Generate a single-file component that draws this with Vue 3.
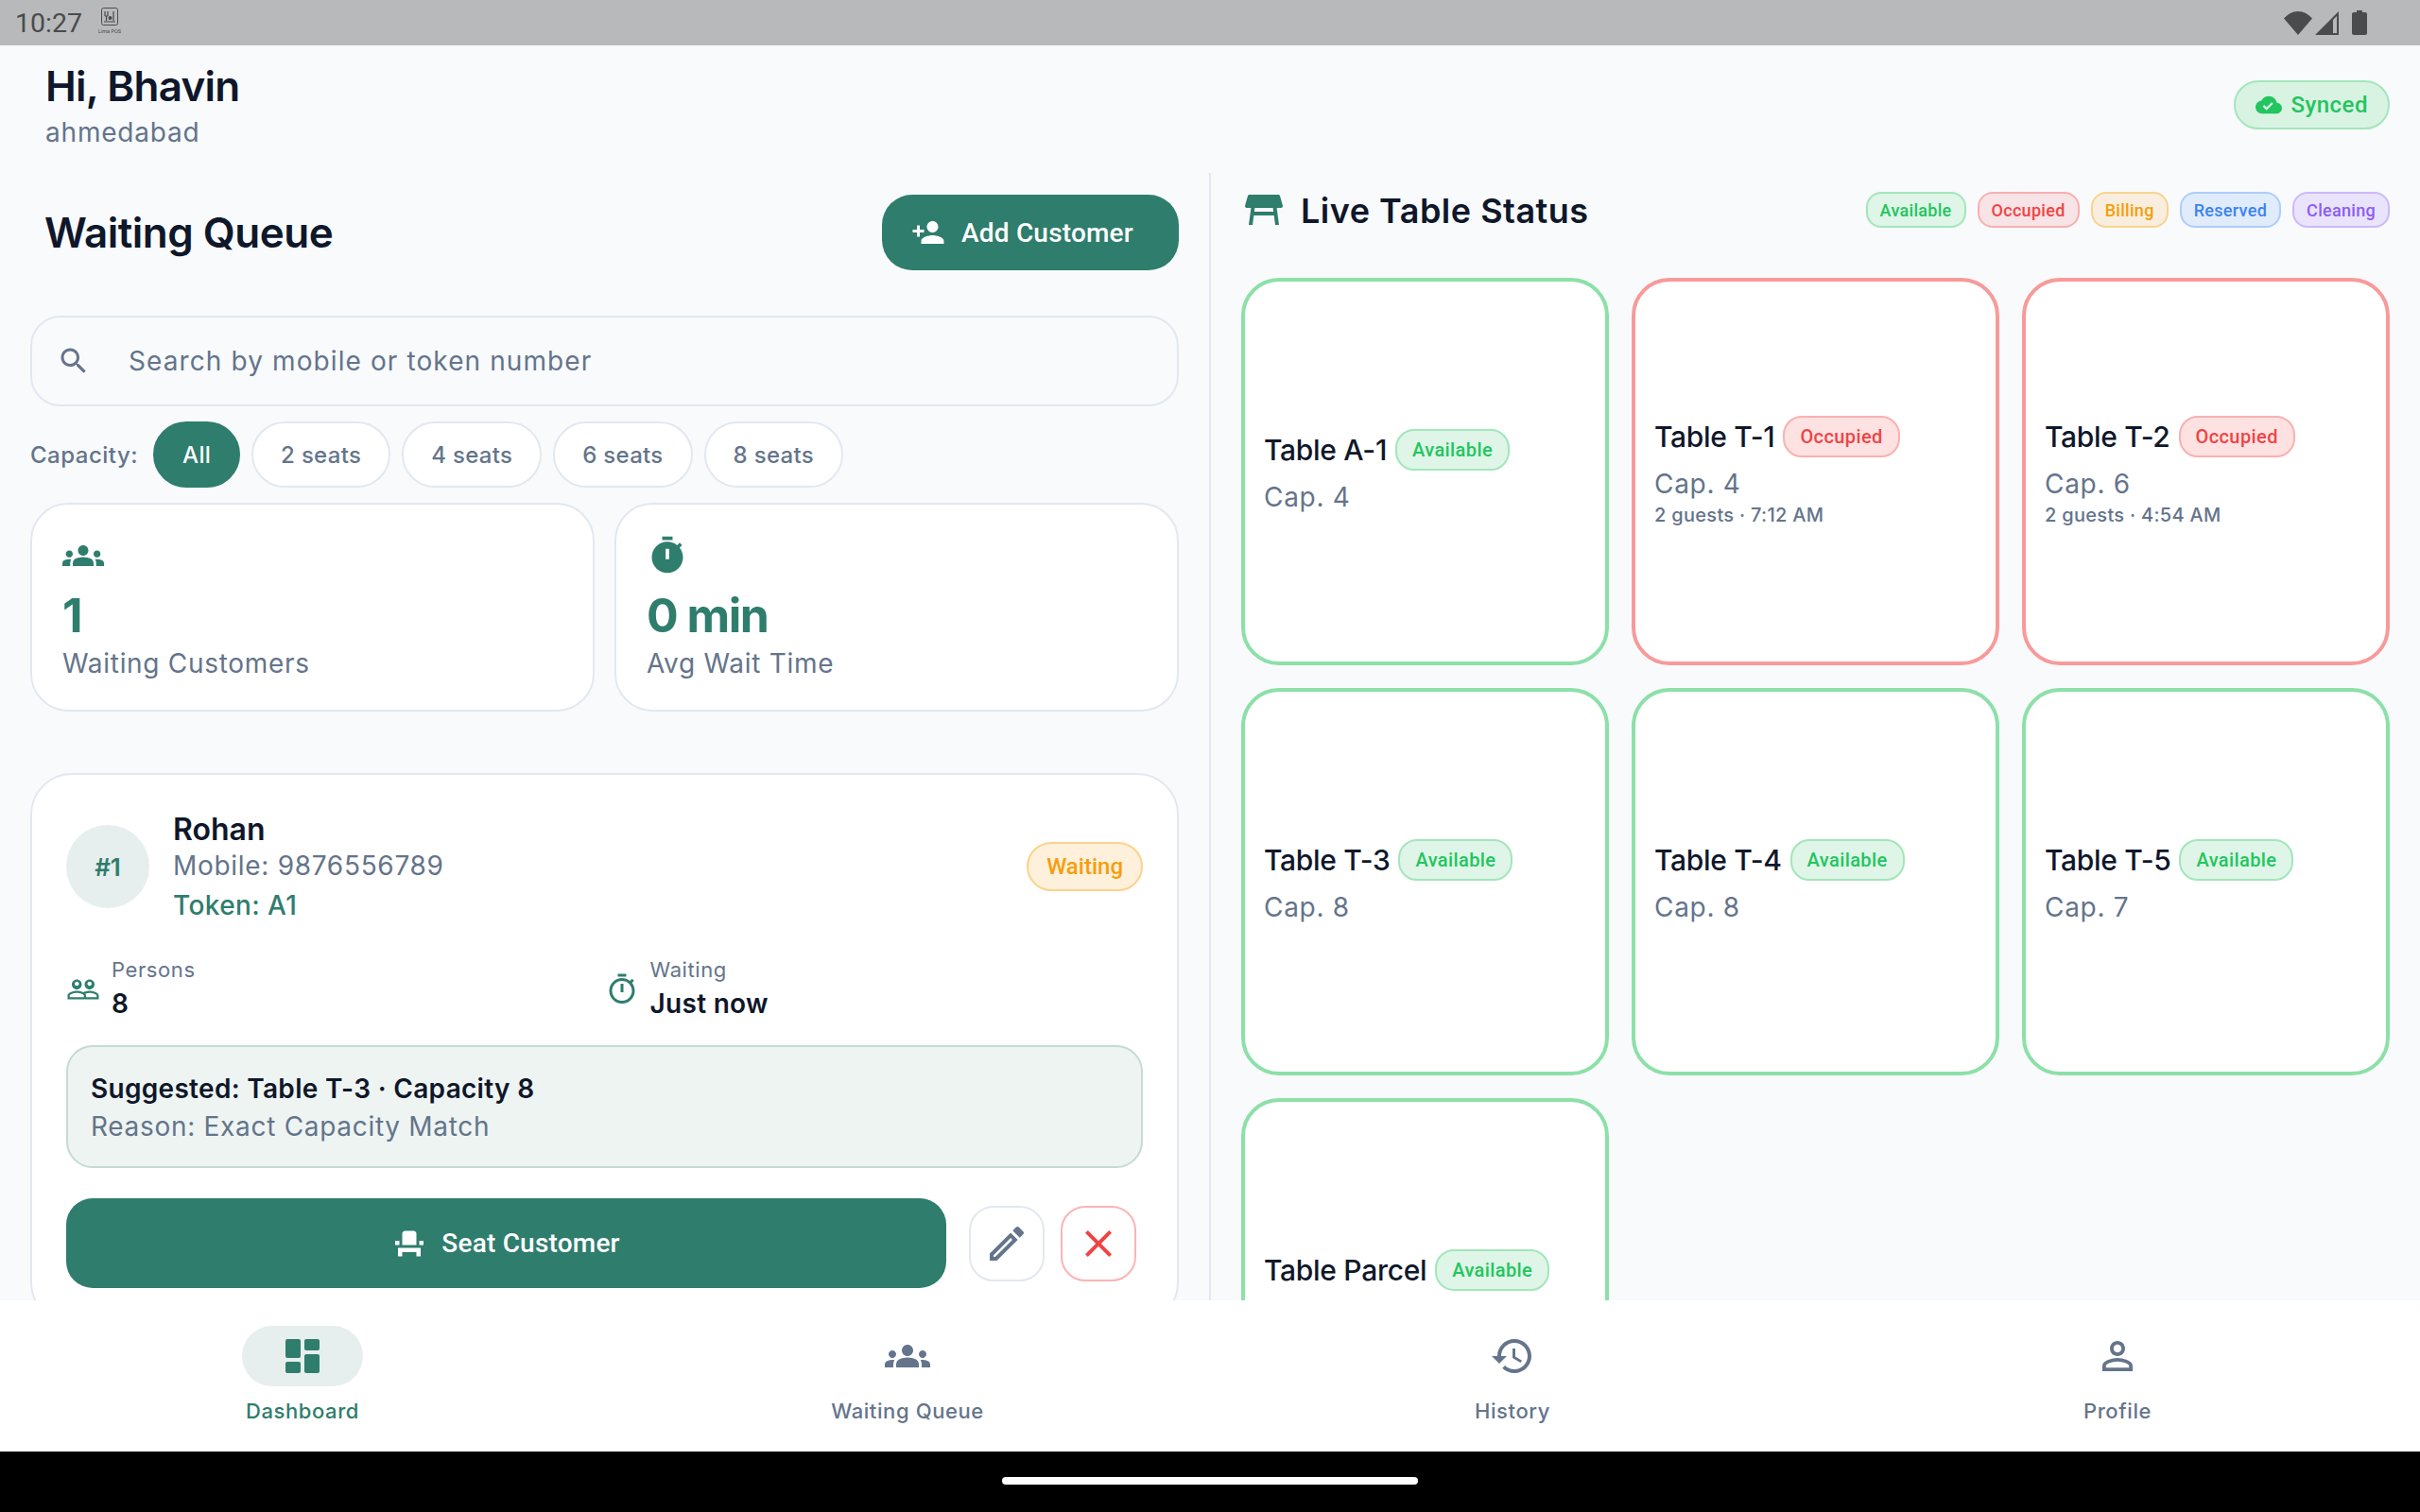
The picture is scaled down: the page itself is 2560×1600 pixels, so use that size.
<template>
  <div class="screen">
    <div class="status-bar">
      <span class="clock">10:27</span>
      <svg class="app-note" viewBox="0 0 24 30">
        <rect x="3.5" y="0.5" width="17" height="18" rx="2" fill="none" stroke="#4a4b4d" />
        <path d="M7 4v5M10 4v5M16 4v10M7 9h3M8.5 9v5M6 15h12" fill="none" stroke="#4a4b4d" stroke-width="1.2" />
        <circle cx="12.5" cy="11" r="2" fill="#4a4b4d" />
        <text x="12" y="27" text-anchor="middle" class="app-note-text">Lima POS</text>
      </svg>
      <div class="status-icons">
        <svg class="wifi" viewBox="0 0 30 25"><path d="M15 25 0 7.5C4 3 9.2 0 15 0s11 3 15 7.5z" /></svg>
        <svg class="signal" viewBox="0 0 25 25"><path d="M25 0v25H0zM23 5 19 9v14h4z" fill-rule="evenodd" /></svg>
        <svg class="battery" viewBox="0 0 16 26"><path d="M5 0h6v2h3a2 2 0 0 1 2 2v20a2 2 0 0 1-2 2H2a2 2 0 0 1-2-2V4a2 2 0 0 1 2-2h3z" /></svg>
      </div>
    </div>

    <header class="top">
      <div>
        <div class="hello">Hi, Bhavin</div>
        <div class="city">ahmedabad</div>
      </div>
      <div class="synced">
        <svg viewBox="0 0 24 24"><path :d="icons.cloud" /></svg>
        Synced
      </div>
    </header>

    <main class="main">
      <section class="left">
        <div class="queue-head">
          <h1>Waiting Queue</h1>
          <button class="add-btn">
            <svg viewBox="0 0 24 24"><path :d="icons.personAdd" /></svg>
            Add Customer
          </button>
        </div>

        <div class="search">
          <svg viewBox="0 0 24 24"><path :d="icons.search" /></svg>
          <span>Search by mobile or token number</span>
        </div>

        <div class="chips">
          <span class="chips-label">Capacity:</span>
          <span v-for="c in capacities" class="chip" :class="{ active: c == 'All' }">{{ c }}</span>
        </div>

        <div class="stats">
          <div class="stat">
            <svg viewBox="0 0 24 24"><path :d="icons.groups" /></svg>
            <div class="stat-value">1</div>
            <div class="stat-label">Waiting Customers</div>
          </div>
          <div class="stat">
            <svg viewBox="0 0 24 24"><path :d="icons.timer" /></svg>
            <div class="stat-value">0 min</div>
            <div class="stat-label">Avg Wait Time</div>
          </div>
        </div>

        <div class="queue-card">
          <div class="person-row">
            <div class="avatar">#1</div>
            <div class="person-text">
              <div class="person-name">Rohan</div>
              <div class="person-mobile">Mobile: 9876556789</div>
              <div class="person-token">Token: A1</div>
            </div>
            <div class="waiting-tag">Waiting</div>
          </div>

          <div class="info-row">
            <div class="info">
              <svg viewBox="0 0 24 24"><path :d="icons.people" /></svg>
              <div>
                <div class="info-label">Persons</div>
                <div class="info-value">8</div>
              </div>
            </div>
            <div class="info">
              <svg viewBox="0 0 24 24"><path :d="icons.timerOutline" /></svg>
              <div>
                <div class="info-label">Waiting</div>
                <div class="info-value">Just now</div>
              </div>
            </div>
          </div>

          <div class="suggest">
            <div class="suggest-title">Suggested: Table T-3 · Capacity 8</div>
            <div class="suggest-reason">Reason: Exact Capacity Match</div>
          </div>

          <div class="actions">
            <button class="seat-btn">
              <svg viewBox="0 0 24 24"><path :d="icons.seat" /></svg>
              Seat Customer
            </button>
            <button class="icon-btn">
              <svg viewBox="0 0 24 24"><path :d="icons.edit" /></svg>
            </button>
            <button class="icon-btn danger">
              <svg viewBox="0 0 24 24"><path :d="icons.close" /></svg>
            </button>
          </div>
        </div>
      </section>

      <section class="right">
        <div class="right-head">
          <svg viewBox="0 0 24 24"><path :d="icons.table" /></svg>
          <h2>Live Table Status</h2>
          <div class="legend">
            <span v-for="l in legend" class="tag" :class="l.toLowerCase()">{{ l }}</span>
          </div>
        </div>

        <div class="tables">
          <div v-for="t in tables" class="table-card" :class="t.status.toLowerCase()">
            <div class="table-title">
              <span>{{ t.name }}</span>
              <span class="table-tag" :class="t.status.toLowerCase()">{{ t.status }}</span>
            </div>
            <div class="table-cap">{{ t.cap ? `Cap. ${t.cap}` : '\u00a0' }}</div>
            <div v-if="t.note" class="table-note">{{ t.note }}</div>
          </div>
        </div>
      </section>
    </main>

    <nav class="nav">
      <div v-for="n in nav" class="nav-item" :class="{ active: n.active }">
        <div class="nav-icon">
          <svg viewBox="0 0 24 24"><path :d="n.icon" /></svg>
        </div>
        <div class="nav-label">{{ n.label }}</div>
      </div>
    </nav>

    <div class="gesture"><div class="home-bar"></div></div>
  </div>
</template>

<script setup>
  const icons = {
    cloud: 'M19.35 10.04C18.67 6.59 15.64 4 12 4 9.11 4 6.6 5.64 5.35 8.04 2.34 8.36 0 10.91 0 14c0 3.31 2.69 6 6 6h13c2.76 0 5-2.24 5-5 0-2.64-2.05-4.78-4.65-4.96zM10 17l-3.5-3.5 1.41-1.41L10 14.17l4.6-4.6 1.41 1.41L10 17z',
    personAdd: 'M15 12c2.21 0 4-1.79 4-4s-1.79-4-4-4-4 1.79-4 4 1.79 4 4 4zm-9-2V7H4v3H1v2h3v3h2v-3h3v-2H6zm9 4c-2.67 0-8 1.34-8 4v2h16v-2c0-2.66-5.33-4-8-4z',
    search: 'M15.5 14h-.79l-.28-.27C15.41 12.59 16 11.11 16 9.5 16 5.91 13.09 3 9.5 3S3 5.91 3 9.5 5.91 16 9.5 16c1.61 0 3.09-.59 4.23-1.57l.27.28v.79l5 4.99L20.49 19l-4.99-5zm-6 0C7.01 14 5 11.99 5 9.5S7.01 5 9.5 5 14 7.01 14 9.5 11.99 14 9.5 14z',
    groups: 'M12 12.75c1.63 0 3.07.39 4.24.9 1.08.48 1.76 1.56 1.76 2.73V18H6v-1.61c0-1.18.68-2.26 1.76-2.73 1.17-.52 2.61-.91 4.24-.91zM4 13c1.1 0 2-.9 2-2s-.9-2-2-2-2 .9-2 2 .9 2 2 2zm1.13 1.1c-.37-.06-.74-.1-1.13-.1-.99 0-1.93.21-2.78.58C.48 14.9 0 15.62 0 16.43V18h4.5v-1.61c0-.83.23-1.61.63-2.29zM20 13c1.1 0 2-.9 2-2s-.9-2-2-2-2 .9-2 2 .9 2 2 2zm4 3.43c0-.81-.48-1.53-1.22-1.85-.85-.37-1.79-.58-2.78-.58-.39 0-.76.04-1.13.1.4.68.63 1.46.63 2.29V18H24v-1.57zM12 6c1.66 0 3 1.34 3 3s-1.34 3-3 3-3-1.34-3-3 1.34-3 3-3z',
    timer: 'M9 1h6v2H9zm10.03 6.39l1.42-1.42c-.43-.51-.9-.99-1.41-1.41l-1.42 1.42C16.07 4.74 14.12 4 12 4c-4.97 0-9 4.03-9 9s4.02 9 9 9 9-4.03 9-9c0-2.12-.74-4.07-1.97-5.61zM13 14h-2V8h2v6z',
    timerOutline: 'M15 1H9v2h6V1zm-4 13h2V8h-2v6zm8.03-6.61l1.42-1.42c-.43-.51-.9-.99-1.41-1.41l-1.42 1.42C16.07 4.74 14.12 4 12 4c-4.97 0-9 4.03-9 9s4.02 9 9 9 9-4.03 9-9c0-2.12-.74-4.07-1.97-5.61zM12 20c-3.87 0-7-3.13-7-7s3.13-7 7-7 7 3.13 7 7-3.13 7-7 7z',
    people: 'M16.5 13c-1.2 0-3.07.34-4.5 1-1.43-.67-3.3-1-4.5-1C5.33 13 1 14.08 1 16.25V19h22v-2.75c0-2.17-4.33-3.25-6.5-3.25zm-4 4.5h-10v-1.25c0-.54 2.56-1.75 5-1.75s5 1.21 5 1.75v1.25zm9 0H14v-1.25c0-.46-.2-.86-.52-1.22.88-.3 1.96-.53 3.02-.53 2.44 0 5 1.21 5 1.75v1.25zM7.5 12c1.93 0 3.5-1.57 3.5-3.5S9.43 5 7.5 5 4 6.57 4 8.5 5.57 12 7.5 12zm0-5.5c.83 0 1.5.67 1.5 1.5s-.67 1.5-1.5 1.5S6 8.83 6 8s.67-1.5 1.5-1.5zm9 5.5c1.93 0 3.5-1.57 3.5-3.5S18.43 5 16.5 5 13 6.57 13 8.5s1.57 3.5 3.5 3.5zm0-5.5c.83 0 1.5.67 1.5 1.5s-.67 1.5-1.5 1.5S15 8.83 15 8s.67-1.5 1.5-1.5z',
    seat: 'M4 18v3h3v-3h10v3h3v-6H4v3zm15-8h3v3h-3v-3zM2 10h3v3H2v-3zm15 3H7V5c0-1.1.9-2 2-2h6c1.1 0 2 .9 2 2v8z',
    edit: 'M14.06 9.02l.92.92L5.92 19H5v-.92l9.06-9.06M17.66 3c-.25 0-.51.1-.7.29l-1.83 1.83 3.75 3.75 1.83-1.83c.39-.39.39-1.02 0-1.41l-2.34-2.34c-.2-.2-.45-.29-.71-.29zm-3.6 3.19L3 17.25V21h3.75L17.81 9.94l-3.75-3.75z',
    close: 'M19 6.41L17.59 5 12 10.59 6.41 5 5 6.41 10.59 12 5 17.59 6.41 19 12 13.41 17.59 19 19 17.59 13.41 12z',
    table: 'M21.96 9.73l-1.43-5C20.41 4.3 20.02 4 19.57 4H4.43c-.45 0-.84.3-.96.73l-1.43 5C1.86 10.36 2.34 11 3 11h2.2L4 20h2l.67-5h10.67l.66 5h2l-1.2-9H21c.66 0 1.14-.64.96-1.27zM6.93 13l.27-2h9.6l.27 2H6.93z',
    dashboard: 'M4 3h6a1 1 0 0 1 1 1v8a1 1 0 0 1-1 1H4a1 1 0 0 1-1-1V4a1 1 0 0 1 1-1zm0 12h6a1 1 0 0 1 1 1v4a1 1 0 0 1-1 1H4a1 1 0 0 1-1-1v-4a1 1 0 0 1 1-1zm10-4h6a1 1 0 0 1 1 1v8a1 1 0 0 1-1 1h-6a1 1 0 0 1-1-1v-8a1 1 0 0 1 1-1zm0-8h6a1 1 0 0 1 1 1v4a1 1 0 0 1-1 1h-6a1 1 0 0 1-1-1V4a1 1 0 0 1 1-1z',
    history: 'M13 3c-4.97 0-9 4.03-9 9H1l3.89 3.89.07.14L9 12H6c0-3.87 3.13-7 7-7s7 3.13 7 7-3.13 7-7 7c-1.93 0-3.68-.79-4.94-2.06l-1.42 1.42C8.27 19.99 10.51 21 13 21c4.97 0 9-4.03 9-9s-4.03-9-9-9zm-1 5v5l4.28 2.54.72-1.21-3.5-2.08V8H12z',
    person: 'M12 5.9c1.16 0 2.1.94 2.1 2.1s-.94 2.1-2.1 2.1S9.9 9.16 9.9 8s.94-2.1 2.1-2.1m0 9c2.97 0 6.1 1.46 6.1 2.1v1.1H5.9V17c0-.64 3.13-2.1 6.1-2.1M12 4C9.79 4 8 5.79 8 8s1.79 4 4 4 4-1.79 4-4-1.79-4-4-4zm0 9c-2.67 0-8 1.34-8 4v3h16v-3c0-2.66-5.33-4-8-4z',
  };

  const capacities = ['All', '2 seats', '4 seats', '6 seats', '8 seats'];
  const legend = ['Available', 'Occupied', 'Billing', 'Reserved', 'Cleaning'];

  const tables = [
    { name: 'Table A-1', status: 'Available', cap: 4 },
    { name: 'Table T-1', status: 'Occupied', cap: 4, note: '2 guests · 7:12 AM' },
    { name: 'Table T-2', status: 'Occupied', cap: 6, note: '2 guests · 4:54 AM' },
    { name: 'Table T-3', status: 'Available', cap: 8 },
    { name: 'Table T-4', status: 'Available', cap: 8 },
    { name: 'Table T-5', status: 'Available', cap: 7 },
    { name: 'Table Parcel', status: 'Available' },
  ];

  const nav = [
    { label: 'Dashboard', icon: icons.dashboard, active: true },
    { label: 'Waiting Queue', icon: icons.groups },
    { label: 'History', icon: icons.history },
    { label: 'Profile', icon: icons.person },
  ];
</script>

<style>
  html,
  body {
    margin: 0;
    padding: 0;
  }
</style>

<style scoped>
  .screen {
    --teal: #2f7d6d;
    --ink: #0f172a;
    --grey: #64748b;
    --line: #e2e8f0;
    display: flex;
    flex-direction: column;
    width: 2560px;
    height: 1600px;
    overflow: hidden;
    background: #f8fafc;
    color: var(--ink);
    font-family: Inter, "Noto Sans", sans-serif;
  }
  svg {
    display: block;
    flex: none;
    fill: currentColor;
  }

  .status-bar {
    display: flex;
    align-items: center;
    flex: none;
    height: 48px;
    padding: 0 56px 0 16px;
    background: #b8b9bb;
    color: #4a4b4d;
  }
  .clock {
    font-family: Roboto, sans-serif;
    font-size: 28.5px;
  }
  .app-note {
    width: 24px;
    height: 30px;
    margin: 0 0 2px 17px;
  }
  .app-note-text {
    font-family: Roboto, sans-serif;
    font-size: 5.5px;
    fill: #4a4b4d;
  }
  .status-icons {
    display: flex;
    align-items: center;
    margin-left: auto;
  }
  .wifi {
    width: 30px;
    height: 25px;
  }
  .signal {
    width: 25px;
    height: 25px;
    margin-left: 3px;
  }
  .battery {
    width: 16px;
    height: 26px;
    margin-left: 14px;
  }

  .top {
    display: flex;
    align-items: center;
    justify-content: space-between;
    flex: none;
    height: 135px;
    padding: 0 32px 10px 48px;
    box-sizing: border-box;
  }
  .hello {
    font-size: 44px;
    font-weight: 600;
    line-height: 54px;
    letter-spacing: -0.8px;
  }
  .city {
    margin-top: 4px;
    font-size: 28px;
    line-height: 36px;
    letter-spacing: 0.8px;
    color: var(--grey);
  }
  .synced {
    display: flex;
    align-items: center;
    gap: 9px;
    height: 52px;
    padding: 0 21px;
    box-sizing: border-box;
    border: 2px solid #a3e6bb;
    border-radius: 26px;
    background: #d9f3e3;
    color: #22c55e;
    font-family: Roboto, sans-serif;
    font-size: 24px;
    font-weight: 500;
    letter-spacing: 0.5px;
  }
  .synced svg {
    width: 28px;
    height: 28px;
  }

  .main {
    display: flex;
    flex: 1;
    min-height: 0;
  }
  .left {
    width: 1281px;
    flex: none;
    box-sizing: border-box;
    padding: 23px 32px 0 32px;
    border-right: 2px solid var(--line);
    overflow: hidden;
  }
  .queue-head {
    display: flex;
    align-items: center;
    justify-content: space-between;
    padding-left: 15px;
  }
  h1 {
    margin: 0;
    font-size: 44px;
    font-weight: 600;
    letter-spacing: -0.5px;
  }
  .add-btn {
    display: flex;
    align-items: center;
    gap: 17px;
    width: 314px;
    height: 80px;
    padding: 0 0 0 31px;
    border: none;
    border-radius: 32px;
    background: var(--teal);
    color: #fff;
    font: 500 28px Roboto, sans-serif;
    letter-spacing: 0.2px;
  }
  .add-btn svg {
    width: 36px;
    height: 36px;
  }
  .search {
    display: flex;
    align-items: center;
    gap: 40px;
    height: 96px;
    margin-top: 48px;
    padding: 0 26px;
    box-sizing: border-box;
    border: 2px solid var(--line);
    border-radius: 32px;
    color: var(--grey);
    font-size: 28px;
    letter-spacing: 1.1px;
  }
  .search svg {
    width: 36px;
    height: 36px;
  }
  .chips {
    display: flex;
    align-items: center;
    gap: 12px;
    margin-top: 16px;
  }
  .chips-label {
    margin-right: 4px;
    font-size: 24px;
    font-weight: 500;
    letter-spacing: 0.5px;
    color: var(--grey);
  }
  .chip {
    display: flex;
    align-items: center;
    height: 70px;
    padding: 0 29px;
    box-sizing: border-box;
    border: 2px solid var(--line);
    border-radius: 35px;
    background: #fff;
    color: var(--grey);
    font-size: 24px;
    font-weight: 500;
    letter-spacing: 0.3px;
  }
  .chip.active {
    border-color: var(--teal);
    background: var(--teal);
    color: #fff;
  }
  .stats {
    display: grid;
    grid-template-columns: 1fr 1fr;
    gap: 21px;
    margin-top: 16px;
  }
  .stat {
    height: 221px;
    padding: 32px;
    box-sizing: border-box;
    border: 2px solid var(--line);
    border-radius: 40px;
    background: #fff;
  }
  .stat svg {
    width: 44px;
    height: 44px;
    color: var(--teal);
  }
  .stat-value {
    margin-top: 11px;
    font-size: 50px;
    font-weight: 700;
    line-height: 60px;
    letter-spacing: -1.5px;
    color: var(--teal);
  }
  .stat-label {
    margin-top: 1px;
    font-size: 28px;
    line-height: 40px;
    letter-spacing: 0.7px;
    color: var(--grey);
  }

  .queue-card {
    margin-top: 65px;
    padding: 36px;
    border: 2px solid var(--line);
    border-radius: 44px;
    background: #fff;
  }
  .person-row {
    display: flex;
    align-items: center;
    gap: 25px;
  }
  .avatar {
    display: flex;
    align-items: center;
    justify-content: center;
    width: 88px;
    height: 88px;
    margin-bottom: 4px;
    border-radius: 50%;
    background: #e6efed;
    color: var(--teal);
    font-size: 26px;
    font-weight: 600;
  }
  .person-text {
    flex: 1;
    padding-top: 2px;
  }
  .person-name {
    font-size: 32px;
    font-weight: 600;
    line-height: 40px;
  }
  .person-mobile {
    font-size: 28px;
    line-height: 36px;
    letter-spacing: 0.7px;
    color: var(--grey);
  }
  .person-token {
    font-size: 28px;
    font-weight: 500;
    line-height: 48px;
    letter-spacing: 0.4px;
    color: var(--teal);
  }
  .waiting-tag {
    display: flex;
    align-items: center;
    height: 52px;
    margin-bottom: 4px;
    padding: 0 19px;
    box-sizing: border-box;
    border: 2px solid #fbd38d;
    border-radius: 26px;
    background: #fef0db;
    color: #f59e0b;
    font-family: Roboto, sans-serif;
    font-size: 24px;
    font-weight: 500;
  }
  .info-row {
    display: grid;
    grid-template-columns: 1fr 1fr;
    margin-top: 28px;
  }
  .info {
    display: flex;
    align-items: center;
    gap: 12px;
  }
  .info svg {
    width: 36px;
    height: 36px;
    margin-top: 4px;
    color: var(--teal);
  }
  .info-label {
    font-size: 22px;
    line-height: 32px;
    letter-spacing: 0.6px;
    color: var(--grey);
  }
  .info-value {
    margin-top: 2px;
    font-size: 28px;
    font-weight: 600;
    line-height: 36px;
    letter-spacing: 0.3px;
  }
  .suggest {
    height: 130px;
    margin-top: 26px;
    padding: 24px;
    box-sizing: border-box;
    border: 2px solid #c6dad5;
    border-radius: 28px;
    background: #eef4f2;
  }
  .suggest-title {
    font-size: 28px;
    font-weight: 600;
    line-height: 40px;
    letter-spacing: 0.3px;
  }
  .suggest-reason {
    font-size: 28px;
    line-height: 40px;
    letter-spacing: 0.7px;
    color: var(--grey);
  }
  .actions {
    display: flex;
    align-items: center;
    margin-top: 32px;
  }
  .seat-btn {
    display: flex;
    align-items: center;
    justify-content: center;
    flex: none;
    gap: 16px;
    width: 931px;
    height: 95px;
    margin-right: 24px;
    border: none;
    border-radius: 28px;
    background: var(--teal);
    color: #fff;
    font: 500 28px Roboto, sans-serif;
    letter-spacing: 0.2px;
  }
  .seat-btn svg {
    width: 36px;
    height: 36px;
  }
  .icon-btn {
    display: flex;
    align-items: center;
    justify-content: center;
    flex: none;
    width: 80px;
    height: 80px;
    margin-right: 17px;
    padding: 0;
    border: 2px solid var(--line);
    border-radius: 26px;
    background: #fff;
    color: var(--grey);
  }
  .icon-btn svg {
    width: 48px;
    height: 48px;
  }
  .icon-btn.danger {
    margin-right: 0;
    border-color: #fbb4b4;
    color: #ef4444;
  }

  .right {
    flex: 1;
    min-width: 0;
    padding: 0 32px;
    overflow: hidden;
  }
  .right-head {
    display: flex;
    align-items: center;
    height: 78px;
  }
  .right-head svg {
    width: 48px;
    height: 48px;
    color: var(--teal);
  }
  h2 {
    margin: 2px 0 0 15px;
    font-size: 36px;
    font-weight: 600;
    letter-spacing: 0.5px;
  }
  .legend {
    display: flex;
    gap: 12px;
    margin-left: auto;
  }
  .tag {
    display: flex;
    align-items: center;
    height: 38px;
    padding: 0 13px;
    box-sizing: border-box;
    border: 2px solid;
    border-radius: 16px;
    font-family: Roboto, sans-serif;
    font-size: 18px;
    font-weight: 500;
    letter-spacing: 0.3px;
  }
  .tag.available {
    border-color: #a3e6bb;
    background: #def5e7;
    color: #22c55e;
  }
  .tag.occupied {
    border-color: #fab0b0;
    background: #f8e3e6;
    color: #ef4444;
  }
  .tag.billing {
    border-color: #f9d38f;
    background: #f9eedd;
    color: #f59e0b;
  }
  .tag.reserved {
    border-color: #aecdfb;
    background: #e0ecfb;
    color: #3b82f6;
  }
  .tag.cleaning {
    border-color: #cdb8fb;
    background: #e9e3fb;
    color: #8b5cf6;
  }
  .tables {
    display: grid;
    grid-template-columns: repeat(3, 1fr);
    grid-auto-rows: 410px;
    gap: 24px;
    margin-top: 33px;
  }
  .table-card {
    display: flex;
    flex-direction: column;
    justify-content: center;
    padding: 0 20px;
    border: 4px solid #8ce0a8;
    border-radius: 40px;
    background: #fff;
  }
  .table-card.occupied {
    border-color: #f89a9a;
  }
  .table-title {
    display: flex;
    align-items: center;
    gap: 9px;
    font-size: 30px;
    font-weight: 500;
    letter-spacing: -0.3px;
  }
  .table-tag {
    display: flex;
    align-items: center;
    height: 44px;
    padding: 0 16px;
    box-sizing: border-box;
    border: 2px solid #a3e6bb;
    border-radius: 20px;
    background: #def5e7;
    color: #22c55e;
    font-family: Roboto, sans-serif;
    font-size: 20px;
    font-weight: 500;
    letter-spacing: 0.4px;
  }
  .table-tag.occupied {
    border-color: #fab0b0;
    background: #fee2e2;
    color: #ef4444;
  }
  .table-cap {
    margin-top: 10px;
    font-size: 28px;
    line-height: 36px;
    letter-spacing: 0.7px;
    color: var(--grey);
  }
  .table-note {
    margin-top: 1px;
    font-size: 20px;
    font-weight: 500;
    line-height: 28px;
    letter-spacing: 0.3px;
    color: var(--grey);
  }

  .nav {
    display: flex;
    flex: none;
    height: 160px;
    background: #fff;
  }
  .nav-item {
    display: flex;
    flex-direction: column;
    align-items: center;
    flex: 1;
    padding-top: 27px;
    color: var(--grey);
  }
  .nav-icon {
    display: flex;
    align-items: center;
    justify-content: center;
    width: 128px;
    height: 64px;
    border-radius: 32px;
  }
  .nav-icon svg {
    width: 48px;
    height: 48px;
  }
  .nav-label {
    margin-top: 10px;
    font-size: 22px;
    font-weight: 500;
    line-height: 32px;
    letter-spacing: 0.6px;
  }
  .nav-item.active {
    color: var(--teal);
  }
  .nav-item.active .nav-icon {
    background: #e6efed;
  }

  .gesture {
    display: flex;
    justify-content: center;
    flex: none;
    height: 64px;
    padding-top: 27px;
    box-sizing: border-box;
    background: #000;
  }
  .home-bar {
    width: 440px;
    height: 8px;
    border-radius: 4px;
    background: #fff;
  }
</style>
